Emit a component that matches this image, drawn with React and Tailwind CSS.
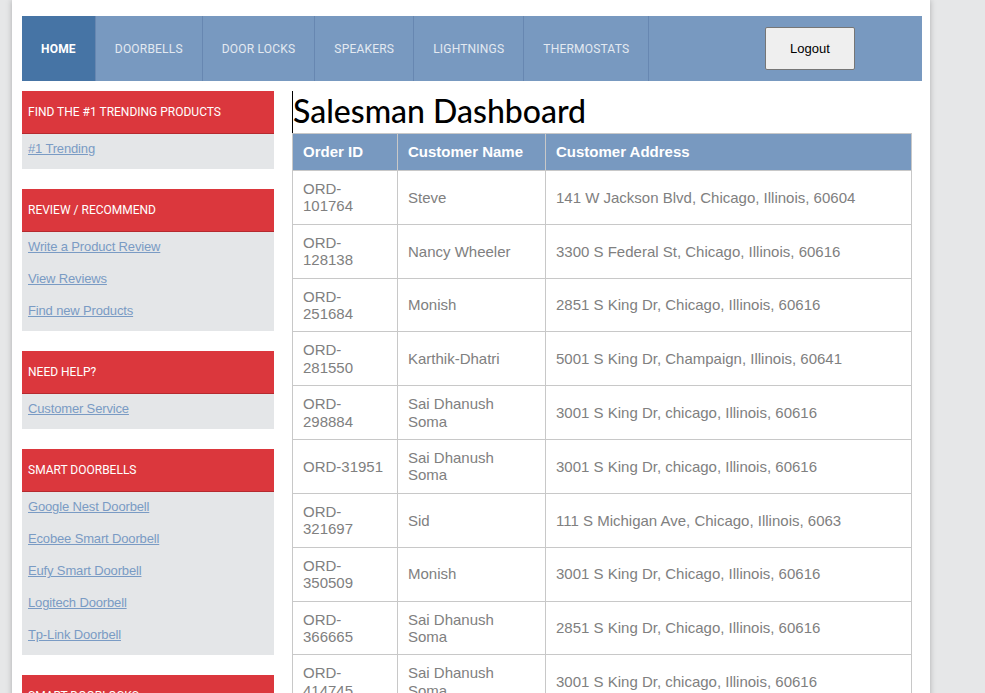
import React from 'react';

const navItems = ['DOORBELLS', 'DOOR LOCKS', 'SPEAKERS', 'LIGHTNINGS', 'THERMOSTATS'];

const sections = [
  { title: 'FIND THE #1 TRENDING PRODUCTS', links: ['#1 Trending'] },
  { title: 'REVIEW / RECOMMEND', links: ['Write a Product Review', 'View Reviews', 'Find new Products'] },
  { title: 'NEED HELP?', links: ['Customer Service'] },
  {
    title: 'SMART DOORBELLS',
    links: ['Google Nest Doorbell', 'Ecobee Smart Doorbell', 'Eufy Smart Doorbell', 'Logitech Doorbell', 'Tp-Link Doorbell']
  },
  { title: 'SMART DOORLOCKS', links: ['August Smart Lock', 'Yale Smart Lock'] }
];

const orders = [
  ['ORD-\n101764', 'Steve', '141 W Jackson Blvd, Chicago, Illinois, 60604'],
  ['ORD-\n128138', 'Nancy Wheeler', '3300 S Federal St, Chicago, Illinois, 60616'],
  ['ORD-\n251684', 'Monish', '2851 S King Dr, Chicago, Illinois, 60616'],
  ['ORD-\n281550', 'Karthik-Dhatri', '5001 S King Dr, Champaign, Illinois, 60641'],
  ['ORD-\n298884', 'Sai Dhanush\nSoma', '3001 S King Dr, chicago, Illinois, 60616'],
  ['ORD-31951', 'Sai Dhanush\nSoma', '3001 S King Dr, chicago, Illinois, 60616'],
  ['ORD-\n321697', 'Sid', '111 S Michigan Ave, Chicago, Illinois, 6063'],
  ['ORD-\n350509', 'Monish', '3001 S King Dr, Chicago, Illinois, 60616'],
  ['ORD-\n366665', 'Sai Dhanush\nSoma', '2851 S King Dr, Chicago, Illinois, 60616'],
  ['ORD-\n414745', 'Sai Dhanush\nSoma', '3001 S King Dr, chicago, Illinois, 60616'],
  ['ORD-\n502211', 'Steve', '141 W Jackson Blvd, Chicago, Illinois, 60604']
];

const App = () => {
  return (
    <div className="min-h-screen bg-[#e6e7e8] font-['Liberation_Sans',Arial,sans-serif]">
      <div className="ml-[12px] w-[918px] min-h-screen bg-white pl-[10px] pr-[8px] pt-[16px] shadow-[0_0_6px_rgba(0,0,0,0.25)]">
        {/* Top nav */}
        <nav className="flex h-[65px] items-stretch bg-[#7899c0] font-['Roboto',sans-serif] text-[12px] tracking-[0.2px]">
          <a className="flex items-center bg-[#4674a5] px-[19px] font-bold text-white">HOME</a>
          {navItems.map((item) => (
            <a key={item} className="flex items-center border-l border-[#6787b1] px-[19px] text-[#e3e9f1]">
              {item}
            </a>
          ))}
          <div className="border-l border-[#6787b1]" />
          <div className="ml-auto mr-[67px] flex items-start pt-[11px]">
            <button className="h-[43px] w-[90px] rounded-[2px] border border-[#767676] bg-[#efefef] text-[13px] tracking-normal text-black font-['Liberation_Sans',Arial,sans-serif]">
              Logout
            </button>
          </div>
        </nav>

        <div className="mt-[10px] flex gap-[18px]">
          {/* Sidebar */}
          <aside className="w-[252px] shrink-0">
            {sections.map((s) => (
              <div key={s.title} className="mb-[20px]">
                <div className="flex h-[43px] items-center border-b border-[#b52a2f] bg-[#db373d] pb-[1px] pl-[6px] font-['Roboto',sans-serif] text-[12px] text-white">
                  {s.title}
                </div>
                <ul className="flex flex-col gap-4 bg-[#e4e6e8] pb-[12px] pl-[6px] pt-[7px] text-[13px] leading-4 tracking-[-0.15px]">
                  {s.links.map((l) => (
                    <li key={l}>
                      <a className="text-[#7a9bc4] underline">{l}</a>
                    </li>
                  ))}
                </ul>
              </div>
            ))}
          </aside>

          {/* Main */}
          <main className="w-[620px]">
            <h1 className="h-[42px] border-l border-black font-['Lato',sans-serif] text-[32px] font-medium leading-[40px] text-black">
              Salesman Dashboard
            </h1>
            <table className="w-full table-fixed border-collapse text-[15px]">
              <colgroup>
                <col className="w-[105px]" />
                <col className="w-[148px]" />
                <col />
              </colgroup>
              <thead>
                <tr className="bg-[#7899c0] text-left text-white">
                  <th className="h-[37px] border border-[#c8c8c8] px-[10px] font-bold">Order ID</th>
                  <th className="border border-[#c8c8c8] px-[10px] font-bold">Customer Name</th>
                  <th className="border border-[#c8c8c8] px-[10px] font-bold">Customer Address</th>
                </tr>
              </thead>
              <tbody className="text-[#808080]">
                {orders.map((o, i) => (
                  <tr key={i}>
                    {o.map((c, j) => (
                      <td
                        key={j}
                        className="whitespace-pre-line border border-[#c8c8c8] px-[10px] py-[9px] align-middle leading-[17.4px]"
                      >
                        {c}
                      </td>
                    ))}
                  </tr>
                ))}
              </tbody>
            </table>
          </main>
        </div>
      </div>
    </div>
  );
};

export default App;
